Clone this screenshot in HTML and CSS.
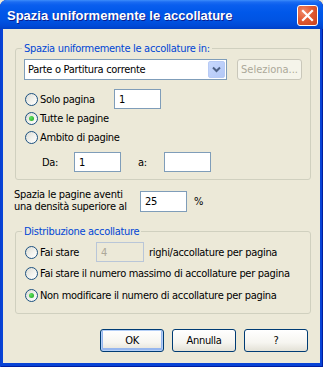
FILE: index.html
```html
<!DOCTYPE html>
<html lang="it">
<head>
    <meta charset="UTF-8">
    <title>Spazia uniformemente le accollature</title>
    <link rel="stylesheet" href="styles.css">
</head>
<body>

<div class="window">
    <div class="titlebar">
        <span class="title">Spazia uniformemente le accollature</span>
        <span class="close">
            <svg width="13" height="13" viewBox="0 0 13 13">
                <path d="M2 2 L11 11 M11 2 L2 11" stroke="#fff" stroke-width="2.2" stroke-linecap="square"/>
            </svg>
        </span>
    </div>

    <div class="content">
        <fieldset class="group group-range">
            <legend>Spazia uniformemente le accollature in:</legend>
            <div class="row row-select">
                <div class="combo">
                    <span class="combo-text">Parte o Partitura corrente</span>
                    <span class="combo-arrow">
                        <svg width="9" height="7" viewBox="0 0 9 7">
                            <path d="M1 1.5 L4.5 5 L8 1.5" fill="none" stroke="#4d6185" stroke-width="2"/>
                        </svg>
                    </span>
                </div>
                <div class="button disabled seleziona">Seleziona...</div>
            </div>
            <div class="row radio-row first">
                <label class="option w-90"><span class="radio"></span>Solo pagina</label>
                <div class="input w-47">1</div>
            </div>
            <div class="row radio-row">
                <label class="option"><span class="radio checked"></span>Tutte le pagine</label>
            </div>
            <div class="row radio-row">
                <label class="option"><span class="radio"></span>Ambito di pagine</label>
            </div>
            <div class="row range-row">
                <span class="range-label">Da:</span>
                <div class="input w-47">1</div>
                <span class="range-label to">a:</span>
                <div class="input w-47"></div>
            </div>
        </fieldset>

        <div class="density">
            <div class="density-text">Spazia le pagine aventi<br>una densità superiore al</div>
            <div class="input w-47 tall">25</div>
            <span class="percent">%</span>
        </div>

        <fieldset class="group group-dist">
            <legend>Distribuzione accollature</legend>
            <div class="row dist-row first">
                <label class="option w-71"><span class="radio"></span>Fai stare</label>
                <div class="input disabled w-48">4</div>
                <span class="after">righi/accollature per pagina</span>
            </div>
            <div class="row dist-row">
                <label class="option"><span class="radio"></span>Fai stare il numero massimo di accollature per pagina</label>
            </div>
            <div class="row dist-row">
                <label class="option"><span class="radio checked"></span>Non modificare il numero di accollature per pagina</label>
            </div>
        </fieldset>

        <div class="actions">
            <div class="button default">OK</div>
            <div class="button">Annulla</div>
            <div class="button">?</div>
        </div>
    </div>
</div>

</body>
</html>
```

FILE: styles.css
```css
* {
    box-sizing: border-box;
}

body {
    margin: 0;
    background: #ece9d8;
    font-family: "DejaVu Sans Condensed", "Liberation Sans", sans-serif;
    font-size: 11px;
    letter-spacing: -0.3px;
    color: #000;
}

.window {
    width: 323px;
    height: 367px;
    display: flex;
    flex-direction: column;
    background: #0843d6;
    border-radius: 7px 7px 0 0;
    overflow: hidden;
    box-shadow: inset 1px 0 0 #0a3fd0, inset -1px 0 0 #001ea0, inset 0 -1px 0 #001ea0;
}

.titlebar {
    height: 29px;
    flex: none;
    display: flex;
    align-items: center;
    justify-content: space-between;
    padding: 0 5px 0 7px;
    background: linear-gradient(#3d8dfa 0, #1b6cf2 2px, #0a5eee 5px, #0058ea 12px, #0054e3 20px, #0049d6 26px, #0040c6 29px);
}

.title {
    color: #fff;
    font-family: "Liberation Sans", sans-serif;
    font-weight: bold;
    font-size: 13px;
    letter-spacing: 0;
    text-shadow: 1px 1px 0 #0b1d8e;
    margin-top: 1px;
}

.close {
    width: 21px;
    height: 21px;
    display: flex;
    align-items: center;
    justify-content: center;
    border: 1px solid #fff;
    border-radius: 3px;
    background: radial-gradient(circle at 30% 30%, #f08a6a 0, #e25a32 45%, #c9411c 100%);
    margin-top: 2px;
}

.content {
    flex: 1;
    margin: 0 3px 4px;
    background: #ece9d8;
    display: flex;
    flex-direction: column;
}

.group {
    margin: 0 9px 0 12px;
    border: 1px solid #d0d0bf;
    border-radius: 3px;
    padding: 0 8px 7px;
    min-width: 0;
}

.group legend {
    color: #0046d5;
    padding: 0 2px;
    margin-left: -2px;
    line-height: 13px;
}

.group-range {
    margin-top: 13px;
}

.group-dist {
    margin-top: 12px;
}

.row {
    display: flex;
    align-items: center;
}

.row-select {
    margin-top: 4px;
    height: 21px;
}

.combo {
    width: 203px;
    height: 21px;
    border: 1px solid #7f9db9;
    background: #fff;
    display: flex;
    align-items: center;
    justify-content: space-between;
    padding: 1px 1px 1px 3px;
}

.combo-arrow {
    width: 17px;
    height: 17px;
    display: flex;
    align-items: center;
    justify-content: center;
    border: 1px solid #b8cbf5;
    border-radius: 2px;
    background: linear-gradient(135deg, #c7d8fd, #b3c8f6);
}

.button {
    width: 64px;
    height: 23px;
    display: flex;
    align-items: center;
    justify-content: center;
    border: 1px solid #003c74;
    border-radius: 3px;
    background: linear-gradient(#fff 0, #f6f5f0 60%, #e3e1d6 100%);
}

.button.default {
    box-shadow: inset 0 0 0 1px #b4cff7, inset 0 -1px 0 2px #96b6ee;
}

.button.disabled {
    border-color: #c9c7ba;
    background: #f5f4ea;
    color: #aca899;
}

.seleziona {
    width: 65px;
    height: 21px;
    margin-left: 10px;
    letter-spacing: 0;
}

.radio-row {
    height: 19px;
    padding-left: 1px;
}

.radio-row.first {
    margin-top: 9px;
    height: 20px;
}

.option {
    display: flex;
    align-items: center;
    white-space: nowrap;
}

.radio {
    width: 13px;
    height: 13px;
    flex: none;
    border: 1px solid #1c5180;
    border-radius: 50%;
    background: linear-gradient(135deg, #dcdcd4 0, #f4f4f0 60%, #fff 100%);
    margin-right: 2px;
    display: flex;
    align-items: center;
    justify-content: center;
}

.radio.checked::after {
    content: "";
    width: 5px;
    height: 5px;
    border-radius: 50%;
    background: radial-gradient(circle at 35% 35%, #5ee35e, #21a121);
}

.w-90 {
    width: 89px;
}

.w-71 {
    width: 71px;
}

.input {
    height: 20px;
    border: 1px solid #7f9db9;
    background: #fff;
    padding: 0 4px;
    display: flex;
    align-items: center;
}

.input.tall {
    height: 21px;
}

.input.disabled {
    border-color: #b9c6d8;
    background: #ece9d8;
    color: #aca899;
}

.w-47 {
    width: 47px;
}

.w-48 {
    width: 48px;
}

.range-row {
    margin-top: 5px;
    height: 20px;
}

.range-label {
    margin-left: 18px;
    width: 32px;
}

.range-label.to {
    margin-left: 17px;
    width: 26px;
}

.density {
    display: flex;
    align-items: center;
    margin: 9px 0 0 11px;
    height: 24px;
}

.density-text {
    width: 126px;
    line-height: 12px;
}

.percent {
    margin-left: 7px;
}

.dist-row {
    height: 22px;
    padding-left: 1px;
}

.dist-row.first {
    margin-top: 4px;
    height: 20px;
}

.after {
    margin-left: 5px;
}

.actions {
    display: flex;
    justify-content: flex-end;
    gap: 8px;
    margin-top: 15px;
    padding-right: 12px;
}
```
